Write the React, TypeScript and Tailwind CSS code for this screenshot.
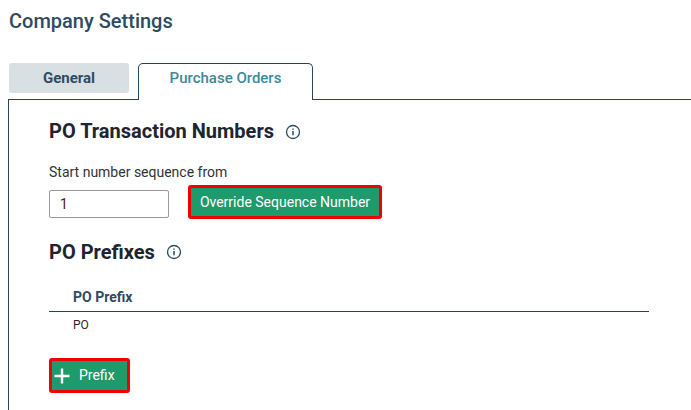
function Info({ cls }: { cls: string }) {
  return (
    <svg width="16" height="16" viewBox="0 0 16 16" fill="none" className={cls} stroke="#2a4a66">
      <circle cx="8" cy="8" r="6.5" strokeWidth="1.3" />
      <path d="M8 7v4.2" strokeWidth="1.5" />
      <path d="M8 4.4v1.4" strokeWidth="1.5" />
    </svg>
  );
}

export default function App() {
  return (
    <div className="w-[691px] h-[410px] overflow-hidden bg-white font-['Roboto',sans-serif]">
      <div className="h-[62px] pl-[9px] pt-[9px]">
        <h1 className="text-[20px] leading-[24px] font-medium text-[#2f4a63]">Company Settings</h1>
      </div>
      <div className="flex items-end pl-[9px] h-[37px]">
        <div className="w-[120px] h-[30px] mb-[6px] flex items-center justify-center rounded-[3px] bg-[#d8e0e3] text-[15px] font-bold text-[#2f4a63]">
          General
        </div>
        <div className="ml-[9px] w-[175px] h-[37px] -mb-px pb-[8px] relative z-10 flex items-center justify-center rounded-t-[5px] border border-b-0 border-[#24475f] bg-white text-[15px] font-medium text-[#3c8a9c]">
          Purchase Orders
        </div>
      </div>
      <div className="ml-[8px] h-[312px] border-l border-t border-[#24475f] pl-[40px] pr-[42px]">
        <div className="flex items-center h-[24px] mt-[20px]">
          <h2 className="text-[20px] font-bold leading-[24px] -translate-y-px text-[#1d2530]">PO Transaction Numbers</h2>
          <Info cls="ml-[11px]" />
        </div>
        <div className="mt-[19px] text-[14px] leading-[18px] text-[#333]">Start number sequence from</div>
        <div className="flex items-start mt-[4px]">
          <div className="w-[120px] h-[28px] mt-[5px] flex items-center pl-[10px] border border-[#9a9a9a] rounded-[2px] text-[14px] text-[#5a1a10]">
            1
          </div>
          <button className="ml-[19px] h-[34px] w-[194px] flex items-center justify-center bg-[#1f9a6b] border-[3px] border-[#f00000] rounded-[3px] text-[14px] text-white">
            Override Sequence Number
          </button>
        </div>
        <div className="flex items-center h-[24px] mt-[21px]">
          <h2 className="text-[20px] font-bold leading-[24px] text-[#1d2530]">PO Prefixes</h2>
          <Info cls="ml-[11px]" />
        </div>
        <div className="mt-[23px] h-[25px] border-b border-[#24475f] pl-[24px] text-[14px] font-bold leading-[20px] text-[#2f4a63]">
          PO Prefix
        </div>
        <div className="h-[26px] pl-[24px] text-[12px] leading-[26px] text-[#3a2030]">PO</div>
        <button className="mt-[20px] h-[35px] w-[81px] flex items-center bg-[#1f9a6b] border-[3px] border-[#f00000] rounded-[3px] text-[14px] text-white">
          <svg width="16" height="16" viewBox="0 0 16 16" className="ml-[2px]" stroke="white" strokeWidth="2.4">
            <path d="M8 0.5v15M0.5 8h15" />
          </svg>
          <span className="ml-[9px]">Prefix</span>
        </button>
      </div>
    </div>
  );
}
